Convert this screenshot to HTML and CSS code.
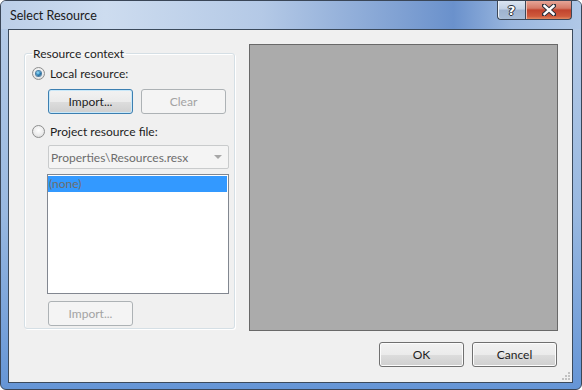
FILE: index.html
```html
<!DOCTYPE html>
<html lang="en">
<head>
    <meta charset="UTF-8">
    <title>Select Resource</title>
    <link rel="stylesheet" href="styles.css">
</head>
<body>

<div class="window">
    <div class="titlebar">
        <span class="title">Select Resource</span>
        <div class="caption-buttons">
            <div class="cap-btn help"><span>?</span></div>
            <div class="cap-btn close">
                <svg width="14" height="12" viewBox="0 0 14 12">
                    <path d="M2 1.5 L12 10.5 M12 1.5 L2 10.5" stroke="#2b2f3a" stroke-width="4.4" stroke-linecap="square"/>
                    <path d="M2.5 2 L11.5 10 M11.5 2 L2.5 10" stroke="#ffffff" stroke-width="2.4" stroke-linecap="square"/>
                </svg>
            </div>
        </div>
    </div>

    <div class="client">
        <div class="main">
            <fieldset class="group">
                <legend>Resource context</legend>
                <label class="radio-row"><span class="radio checked"></span>Local resource:</label>
                <div class="btn-row">
                    <button class="btn default">Import...</button>
                    <button class="btn" disabled>Clear</button>
                </div>
                <label class="radio-row second"><span class="radio"></span>Project resource file:</label>
                <div class="combo">
                    <span>Properties\Resources.resx</span>
                    <span class="arrow"></span>
                </div>
                <div class="listbox">
                    <div class="item selected">(none)</div>
                </div>
                <button class="btn import2" disabled>Import...</button>
            </fieldset>
            <div class="preview"></div>
        </div>

        <div class="footer">
            <button class="btn">OK</button>
            <button class="btn">Cancel</button>
        </div>

        <!-- size grip -->
        <svg class="grip" width="10" height="10" viewBox="0 0 10 10">
            <rect x="7" y="1" width="2" height="2" fill="#c2c2c2"/>
            <rect x="4" y="4" width="2" height="2" fill="#c2c2c2"/>
            <rect x="7" y="4" width="2" height="2" fill="#c2c2c2"/>
            <rect x="1" y="7" width="2" height="2" fill="#c2c2c2"/>
            <rect x="4" y="7" width="2" height="2" fill="#c2c2c2"/>
            <rect x="7" y="7" width="2" height="2" fill="#c2c2c2"/>
        </svg>
    </div>
</div>

</body>
</html>
```

FILE: styles.css
```css
body {
    margin: 0;
    background: #ffffff;
    font-family: Lato, "Open Sans", sans-serif;
    font-size: 12px;
    color: #1e1e1e;
}
.window {
    width: 582px;
    height: 390px;
    box-sizing: border-box;
    border: 1px solid #3a4657;
    border-radius: 6px;
    background: linear-gradient(to bottom, #b7cce7, #98b8e0 55%, #6595d6);
    display: flex;
    flex-direction: column;
    overflow: hidden;
}
.titlebar {
    height: 28px;
    display: flex;
    align-items: flex-start;
    background: linear-gradient(to right, #bccfe8 0%, #cddcef 18%, #b4c9e6 45%, #7d9fd2 70%, #6a91cc 78%, #9ab7df 88%, #b0c8e7 100%);
}
.title {
    margin: 7px 0 0 9px;
    font-size: 12.5px;
    color: #1a1a1a;
}
.caption-buttons {
    margin-left: auto;
    margin-right: 9px;
    display: flex;
}
.cap-btn {
    height: 19px;
    box-sizing: border-box;
    border: 1px solid #3c4757;
    border-top: none;
    display: flex;
    justify-content: center;
    align-items: center;
}
.cap-btn.help {
    width: 28px;
    border-right: none;
    border-bottom-left-radius: 4px;
    background: linear-gradient(to bottom, #dbe5f2, #c3d2e6 45%, #9fb3cf 50%, #a9bdd7);
    box-shadow: inset 1px 0 0 #eef3f9;
}
.cap-btn.help span {
    font-family: "DejaVu Sans", sans-serif;
    font-weight: bold;
    font-size: 13px;
    color: #ffffff;
    text-shadow: 0 0 1px #2b2f3a, 1px 0 0 #2b2f3a, -1px 0 0 #2b2f3a, 0 1px 0 #2b2f3a, 0 -1px 0 #2b2f3a;
}
.cap-btn.close {
    width: 47px;
    border-bottom-right-radius: 4px;
    background: linear-gradient(to bottom, #e6a597, #d57a67 40%, #c1442e 50%, #cf5a3c 85%, #e08a62);
    box-shadow: inset 1px 0 0 #eec0b4;
}
.client {
    flex: 1;
    margin: 0 8px 6px 7px;
    border: 1px solid #3b4a5c;
    background: #f0f0f0;
    padding: 14px 15px 0 15px;
    position: relative;
}
.main {
    display: flex;
    align-items: flex-start;
}
.group {
    width: 211px;
    min-width: 0;
    flex-shrink: 0;
    box-sizing: border-box;
    margin: 2px 0 0 0;
    padding: 5px 5px 2px 7px;
    border: 1px solid #d5dfe5;
    border-radius: 3px;
    box-shadow: 1px 1px 0 #ffffff, inset 1px 1px 0 #ffffff;
}
.group legend {
    padding: 0 2px 0 1px;
    line-height: 15px;
    color: #1e1e1e;
}
.radio-row {
    display: flex;
    align-items: center;
    height: 15px;
    gap: 5px;
}
.radio-row.second {
    margin-top: 10px;
}
.radio {
    width: 13px;
    height: 13px;
    box-sizing: border-box;
    border-radius: 50%;
    border: 1px solid #8e8f8f;
    background: radial-gradient(circle at 50% 40%, #ffffff, #ececec 55%, #cfcfcf);
    display: grid;
    place-items: center;
}
.radio.checked::after {
    content: "";
    width: 5px;
    height: 5px;
    border-radius: 50%;
    background: radial-gradient(circle at 40% 35%, #9ce4ff, #2279b0 55%, #103a5c);
    box-shadow: 0 0 0 1px #4f7ea3;
}
.btn {
    width: 85px;
    height: 25px;
    box-sizing: border-box;
    border: 1px solid #707070;
    border-radius: 3px;
    background: linear-gradient(to bottom, #f2f2f2, #ebebeb 50%, #dddddd 51%, #cfcfcf);
    box-shadow: inset 0 0 0 1px #fcfcfc;
    font-family: inherit;
    font-size: 12px;
    color: #1e1e1e;
    padding: 0;
}
.btn.default {
    border-color: #3c7fb1;
    box-shadow: inset 0 0 0 1px #c9e8f9;
}
.btn:disabled {
    border-color: #adb2b5;
    background: #f4f4f4;
    box-shadow: none;
    color: #a3a3a3;
}
.btn-row {
    display: flex;
    gap: 8px;
    margin: 8px 0 0 16px;
}
.combo {
    width: 181px;
    height: 24px;
    box-sizing: border-box;
    margin: 6px 0 0 16px;
    border: 1px solid #c9cbcc;
    border-radius: 2px;
    background: #f4f4f4;
    color: #6d6d6d;
    display: flex;
    align-items: center;
    padding: 0 6px 0 2px;
}
.combo .arrow {
    margin-left: auto;
    width: 0;
    height: 0;
    border-left: 4px solid transparent;
    border-right: 4px solid transparent;
    border-top: 4px solid #a7a7a7;
}
.listbox {
    width: 182px;
    height: 120px;
    box-sizing: border-box;
    margin: 5px 0 0 15px;
    border: 1px solid #828790;
    background: #ffffff;
    padding: 1px 1px 0 0;
}
.item {
    height: 16px;
    line-height: 16px;
    padding-left: 1px;
    color: #6d6d6d;
}
.item.selected {
    background: #3399ff;
}
.import2 {
    display: block;
    margin: 7px 0 0 16px;
}
.preview {
    width: 309px;
    height: 287px;
    flex-shrink: 0;
    box-sizing: border-box;
    margin: 0 -1px 0 14px;
    border: 1px solid #696969;
    background: #ababab;
}
.footer {
    display: flex;
    justify-content: flex-end;
    gap: 8px;
    margin-top: 11px;
}
.grip {
    position: absolute;
    right: 1px;
    bottom: 1px;
}
```
